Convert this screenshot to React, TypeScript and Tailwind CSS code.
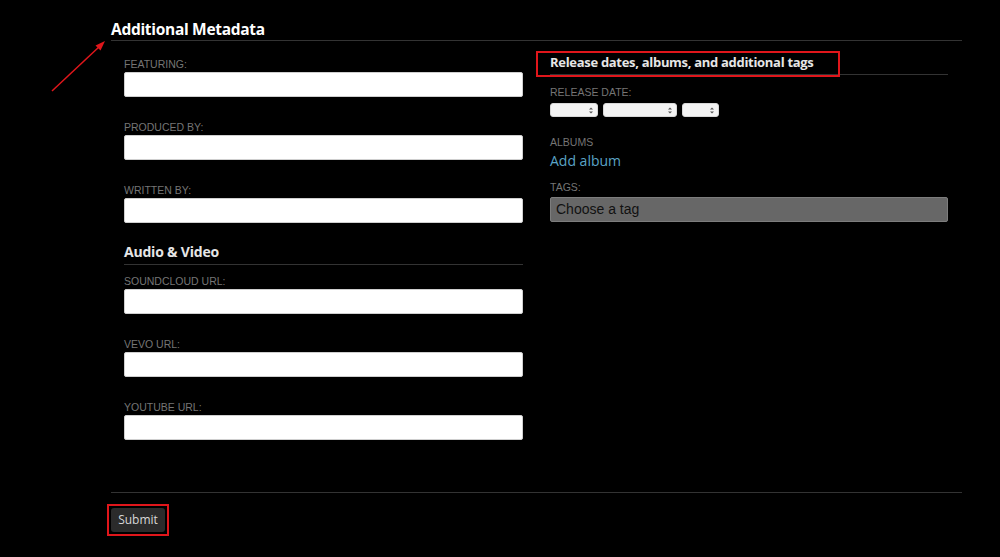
import React from 'react';

const label = "block text-[10.5px] leading-[12px] uppercase text-[#757575] font-['Liberation_Sans',Arial,sans-serif]";

function Field({ name, last }: { name: string; last?: boolean }) {
  return (
    <div className={last ? '' : 'mb-[24px]'}>
      <label className={label}>{name}</label>
      <input
        type="text"
        className="mt-[2px] block h-[25px] w-full rounded-[2px] border border-[#cfcfcf] bg-white px-2 text-[13px] outline-none"
      />
    </div>
  );
}

function Select({ w }: { w: string }) {
  return (
    <div className={`relative h-[14px] ${w} rounded-[3px] bg-[#f4f4f4] border border-[#d8d8d8]`}>
      <svg className="absolute right-[4px] top-[3px]" width="4" height="7" viewBox="0 0 4 7">
        <path d="M0 2.6 L2 0.4 L4 2.6 Z M0 4.4 L2 6.6 L4 4.4 Z" fill="#555" />
      </svg>
    </div>
  );
}

export default function App() {
  return (
    <div className="relative h-[557px] w-[1000px] overflow-hidden bg-black font-['Open_Sans',sans-serif]">
      {/* annotation arrow */}
      <svg className="absolute left-0 top-0" width="120" height="100" viewBox="0 0 120 100">
        <line x1="52" y1="91" x2="100" y2="46" stroke="#e0161b" strokeWidth="1.5" />
        <path d="M105 41 L95.5 45.5 L100.5 50.5 Z" fill="#e0161b" />
      </svg>

      <div className="ml-[111px] w-[851px] pt-[18px]">
        <h2 className="border-b border-[#333] pb-[0px] text-[15.5px] font-bold leading-[22px] tracking-[-0.3px] text-white">
          Additional Metadata
        </h2>

        <div className="flex pl-[13px] pr-[14px]">
          {/* left column */}
          <div className="w-[399px] pt-[17px]">
            <Field name="Featuring:" />
            <Field name="Produced by:" />
            <Field name="Written by:" last />

            <h3 className="mt-[20px] border-b border-[#333] pb-[3px] text-[14px] font-bold leading-[18px] tracking-[-0.2px] text-[#e6e6e6]">
              Audio &amp; Video
            </h3>
            <div className="pt-[10px]">
              <Field name="Soundcloud URL:" />
              <Field name="Vevo URL:" />
              <Field name="Youtube URL:" last />
            </div>
          </div>

          {/* right column */}
          <div className="ml-[27px] w-[398px] pt-[12px]">
            <div className="relative">
              <span className="pointer-events-none absolute left-[-14px] top-[-2px] h-[26px] w-[304px] border-2 border-[#e0161b]" />
              <h3 className="border-b border-[#333] pb-[3px] text-[13px] font-bold leading-[18px] tracking-[-0.3px] text-[#e6e6e6]">
                Release dates, albums, and additional tags
              </h3>
            </div>

            <div className="mt-[11px]">
              <label className={label}>Release date:</label>
              <div className="mt-[5px] flex gap-[5px]">
                <Select w="w-[48px]" />
                <Select w="w-[74px]" />
                <Select w="w-[37px]" />
              </div>
            </div>

            <div className="mt-[19px]">
              <label className={label}>Albums</label>
              <a className="mt-[4px] block text-[14px] leading-[18px] text-[#5aa4c6]" href="#">
                Add album
              </a>
            </div>

            <div className="mt-[11px]">
              <label className={label}>Tags:</label>
              <div className="mt-[4px] flex h-[25px] items-center rounded-[2px] border border-[#7d7d7d] bg-[#676767] pl-[5px] font-['Liberation_Sans',Arial,sans-serif] text-[14px] text-[#111]">
                Choose a tag
              </div>
            </div>
          </div>
        </div>

        <div className="mt-[52px] border-t border-[#333] pt-[11px]">
          <span className="ml-[-4px] inline-block border-2 border-[#e0161b] p-[2px]">
            <button className="block h-[24px] w-[54px] rounded-[3px] bg-[#2b2b2b] text-[12px] font-medium text-[#d8d8d8]">
              Submit
            </button>
          </span>
        </div>
      </div>
    </div>
  );
}
